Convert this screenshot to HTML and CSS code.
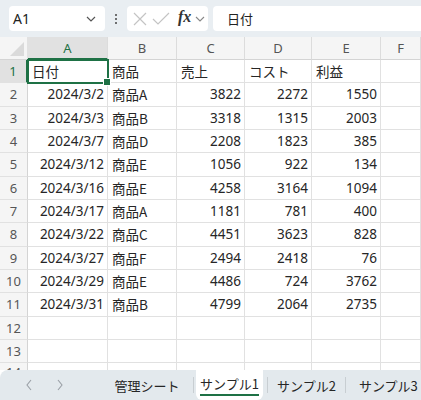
FILE: index.html
```html
<!DOCTYPE html>
<html lang="ja">
<head>
<meta charset="utf-8">
<link rel="stylesheet" href="styles.css">
</head>
<body>
<div class="app">
  <div class="toolbar">
    <div class="namebox">
      <span class="name">A1</span>
      <svg class="chev" width="12" height="8" viewBox="0 0 12 8"><path d="M2 2 L6 6 L10 2" fill="none" stroke="#555" stroke-width="1.2"/></svg>
    </div>
    <div class="dots"><i></i><i></i><i></i></div>
    <div class="fbtns">
      <svg width="16" height="16" viewBox="0 0 16 16"><path d="M2 2 L14 14 M14 2 L2 14" stroke="#c4c4c4" stroke-width="1.2" fill="none"/></svg>
      <svg width="18" height="16" viewBox="0 0 18 16"><path d="M1 8 L6 13 L17 2" stroke="#c4c4c4" stroke-width="1.2" fill="none"/></svg>
      <span class="fx">fx</span>
      <svg width="10" height="8" viewBox="0 0 10 8"><path d="M1 2 L5 6 L9 2" fill="none" stroke="#888" stroke-width="1.1"/></svg>
    </div>
    <div class="finput">日付</div>
  </div>
  <div class="sheet">
    <div class="corner"><span class="tri"></span></div>
    <div class="ch sel">A</div><div class="ch">B</div><div class="ch">C</div><div class="ch">D</div><div class="ch">E</div><div class="ch">F</div>

    <div class="rh sel">1</div><div class="c t active">日付</div><div class="c t">商品</div><div class="c t">売上</div><div class="c t">コスト</div><div class="c t">利益</div><div class="c"></div>
    <div class="rh">2</div><div class="c n">2024/3/2</div><div class="c t">商品A</div><div class="c n">3822</div><div class="c n">2272</div><div class="c n">1550</div><div class="c"></div>
    <div class="rh">3</div><div class="c n">2024/3/3</div><div class="c t">商品B</div><div class="c n">3318</div><div class="c n">1315</div><div class="c n">2003</div><div class="c"></div>
    <div class="rh">4</div><div class="c n">2024/3/7</div><div class="c t">商品D</div><div class="c n">2208</div><div class="c n">1823</div><div class="c n">385</div><div class="c"></div>
    <div class="rh">5</div><div class="c n">2024/3/12</div><div class="c t">商品E</div><div class="c n">1056</div><div class="c n">922</div><div class="c n">134</div><div class="c"></div>
    <div class="rh">6</div><div class="c n">2024/3/16</div><div class="c t">商品E</div><div class="c n">4258</div><div class="c n">3164</div><div class="c n">1094</div><div class="c"></div>
    <div class="rh">7</div><div class="c n">2024/3/17</div><div class="c t">商品A</div><div class="c n">1181</div><div class="c n">781</div><div class="c n">400</div><div class="c"></div>
    <div class="rh">8</div><div class="c n">2024/3/22</div><div class="c t">商品C</div><div class="c n">4451</div><div class="c n">3623</div><div class="c n">828</div><div class="c"></div>
    <div class="rh">9</div><div class="c n">2024/3/27</div><div class="c t">商品F</div><div class="c n">2494</div><div class="c n">2418</div><div class="c n">76</div><div class="c"></div>
    <div class="rh">10</div><div class="c n">2024/3/29</div><div class="c t">商品E</div><div class="c n">4486</div><div class="c n">724</div><div class="c n">3762</div><div class="c"></div>
    <div class="rh">11</div><div class="c n">2024/3/31</div><div class="c t">商品B</div><div class="c n">4799</div><div class="c n">2064</div><div class="c n">2735</div><div class="c"></div>
    <div class="rh">12</div><div class="c"></div><div class="c"></div><div class="c"></div><div class="c"></div><div class="c"></div><div class="c"></div>
    <div class="rh">13</div><div class="c"></div><div class="c"></div><div class="c"></div><div class="c"></div><div class="c"></div><div class="c"></div>
    <div class="rh">14</div><div class="c"></div><div class="c"></div><div class="c"></div><div class="c"></div><div class="c"></div><div class="c"></div>
  </div>
  <div class="tabbar">
    <div class="nav">
      <svg width="10" height="14" viewBox="0 0 10 14"><path d="M7 2 L3 7 L7 12" fill="none" stroke="#9aa0a6" stroke-width="1.1"/></svg>
      <svg width="10" height="14" viewBox="0 0 10 14"><path d="M3 2 L7 7 L3 12" fill="none" stroke="#9aa0a6" stroke-width="1.1"/></svg>
    </div>
    <div class="tab t1">管理シート</div>
    <span class="sep s1"></span>
    <div class="tab active"><span>サンプル1</span></div>
    <span class="sep s2"></span>
    <div class="tab t2">サンプル2</div>
    <span class="sep"></span>
    <div class="tab t3">サンプル3</div>
  </div>
</div>
</body>
</html>
```

FILE: styles.css
```css
* { box-sizing: border-box; }
html, body { margin: 0; padding: 0; }
body {
  width: 421px;
  height: 400px;
  overflow: hidden;
  background: #ffffff;
  font-family: "Noto Sans CJK JP", "Noto Sans", sans-serif;
  color: #262626;
}
.app {
  width: 421px;
  height: 400px;
  display: flex;
  flex-direction: column;
  overflow: hidden;
}
.toolbar {
  height: 37px;
  flex: none;
  background: #e9eef2;
  display: flex;
  align-items: center;
  padding: 0 0 0 9px;
}
.namebox {
  width: 96px;
  height: 25px;
  background: #fff;
  border-radius: 4px;
  display: flex;
  align-items: center;
  justify-content: space-between;
  padding: 0 8px 0 4px;
  font-size: 14px;
}
.name { color: #222; font-family: "Noto Sans", sans-serif; }
.dots {
  width: 22px;
  display: flex;
  flex-direction: column;
  align-items: center;
  gap: 2px;
}
.dots i {
  display: block;
  width: 2px;
  height: 2px;
  background: #444;
  border-radius: 1px;
}
.fbtns {
  width: 81px;
  height: 25px;
  background: #fff;
  border-radius: 4px;
  display: flex;
  align-items: center;
  padding: 0 0 0 5px;
  gap: 4px;
}
.fx {
  font-family: "Liberation Serif", serif;
  font-style: italic;
  font-weight: bold;
  font-size: 16px;
  color: #333;
  margin-left: 4px;
  margin-top: -3px;
}
.finput {
  margin-left: 5px;
  flex: 1;
  height: 25px;
  background: #fff;
  border-radius: 4px 0 0 4px;
  display: flex;
  align-items: center;
  padding-left: 14px;
  font-size: 13px;
  color: #222;
}
.sheet {
  flex: none;
  display: grid;
  grid-template-columns: 28px 80px 69px 68px 67px 69px 40px;
  grid-template-rows: 23px repeat(13, 23.33px);
  height: 333px;
  overflow: hidden;
  font-size: 13.5px;
}
.corner {
  background: #f5f5f5;
  border-right: 1px solid #e1e1e1;
  border-bottom: 1px solid #d4d4d4;
  position: relative;
}
.tri {
  position: absolute;
  right: 3px;
  bottom: 3px;
  width: 0;
  height: 0;
  border-left: 14px solid transparent;
  border-bottom: 14px solid #dadada;
}
.ch {
  background: #f5f5f5;
  border-right: 1px solid #dcdcdc;
  border-bottom: 1px solid #d4d4d4;
  display: flex;
  align-items: center;
  justify-content: center;
  font-family: "Noto Sans", sans-serif;
  font-size: 13px;
  color: #555;
}
.ch.sel {
  background: #e1e1e1;
  color: #1e7145;
  border-bottom: 2px solid #1e7145;
}
.rh {
  background: #f5f5f5;
  border-right: 1px solid #d4d4d4;
  border-bottom: 1px solid #e1e1e1;
  display: flex;
  align-items: center;
  justify-content: center;
  font-family: "Noto Sans", sans-serif;
  font-size: 13px;
  color: #555;
}
.rh.sel {
  background: #e1e1e1;
  color: #1e7145;
  border-right: 2px solid #1e7145;
}
.c {
  border-right: 1px solid #e1e1e1;
  border-bottom: 1px solid #e1e1e1;
  display: flex;
  align-items: center;
  padding: 0 3px 0 4px;
  white-space: nowrap;
  position: relative;
}
.c.n { justify-content: flex-end; font-family: "Noto Sans", sans-serif; }
.c.t { justify-content: flex-start; }
.c.active {
  outline: 2px solid #1e7145;
  outline-offset: -1px;
  z-index: 1;
}
.c.active::after {
  content: "";
  position: absolute;
  right: -4px;
  bottom: -4px;
  width: 6px;
  height: 6px;
  background: #1e7145;
  border: 1px solid #fff;
}
.tabbar {
  flex: 1;
  background: #e3e9ed;
  border-top-left-radius: 8px;
  display: flex;
  align-items: center;
  font-size: 13px;
  color: #262626;
  white-space: nowrap;
  position: relative;
  z-index: 2;
}
.nav {
  flex: none;
  width: 104px;
  display: flex;
  gap: 21px;
  padding-left: 24px;
}
.tab {
  flex: none;
  height: 100%;
  display: flex;
  align-items: center;
  justify-content: center;
  white-space: nowrap;
}
.t1 { width: 86px; margin-right: 3px; }
.tab.active {
  background: #fff;
  width: 67px;
  margin: 0 4px 0 2px;
  border-radius: 0 0 6px 6px;
}
.tab.active span {
  border-bottom: 2px solid #1e7145;
  padding-bottom: 1px;
}
.t2 { width: 77px; }
.t3 { justify-content: flex-start; padding-left: 13px; }
.sep {
  flex: none;
  width: 1px;
  height: 16px;
  background: #c8ced2;
}
```
